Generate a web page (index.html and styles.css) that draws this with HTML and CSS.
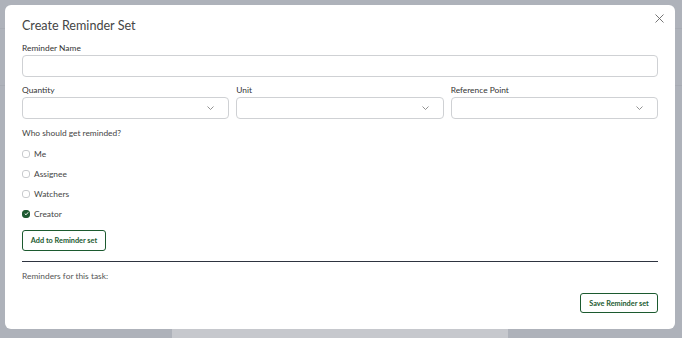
FILE: index.html
```html
<!DOCTYPE html>
<html>
<head>
<meta charset="utf-8">
<link rel="stylesheet" href="styles.css">
</head>
<body>
<div class="backdrop">
  <div class="bg-row bg-row-a"></div>
  <div class="bg-row bg-row-b"></div>
  <div class="bg-panel"><div class="bg-card"></div></div>
</div>
<div class="modal">
  <button class="close" aria-label="Close">
    <svg width="9" height="9" viewBox="0 0 9 9"><path d="M0.5 0.5L8.5 8.5M8.5 0.5L0.5 8.5" stroke="#666" stroke-width="0.9" fill="none"/></svg>
  </button>
  <h1 class="title">Create Reminder Set</h1>
  <label class="label">Reminder Name</label>
  <div class="input"></div>
  <div class="row3">
    <div class="field">
      <label class="label">Quantity</label>
      <div class="select"><svg class="chev" width="7" height="4" viewBox="0 0 7 4"><path d="M0.5 0.5L3.5 3.5L6.5 0.5" stroke="#777" stroke-width="0.8" fill="none"/></svg></div>
    </div>
    <div class="field">
      <label class="label">Unit</label>
      <div class="select"><svg class="chev" width="7" height="4" viewBox="0 0 7 4"><path d="M0.5 0.5L3.5 3.5L6.5 0.5" stroke="#777" stroke-width="0.8" fill="none"/></svg></div>
    </div>
    <div class="field">
      <label class="label">Reference Point</label>
      <div class="select"><svg class="chev" width="7" height="4" viewBox="0 0 7 4"><path d="M0.5 0.5L3.5 3.5L6.5 0.5" stroke="#777" stroke-width="0.8" fill="none"/></svg></div>
    </div>
  </div>
  <p class="question">Who should get reminded?</p>
  <ul class="checks">
    <li><span class="box"></span>Me</li>
    <li><span class="box"></span>Assignee</li>
    <li><span class="box"></span>Watchers</li>
    <li><span class="box checked"><svg width="7" height="7" viewBox="0 0 7 7"><path d="M1.8 3.7L3 4.8L5.2 2.3" stroke="#fff" stroke-width="1" fill="none"/></svg></span>Creator</li>
  </ul>
  <button class="btn add">Add to Reminder set</button>
  <hr class="divider">
  <p class="sub">Reminders for this task:</p>
  <div class="footer">
    <button class="btn save">Save Reminder set</button>
  </div>
</div>
</body>
</html>
```
FILE: styles.css
```css
* { box-sizing: border-box; }
html, body { margin: 0; padding: 0; }
body {
  width: 682px;
  height: 338px;
  overflow: hidden;
  background: #aeb2ba;
  font-family: "Lato", "Noto Sans", sans-serif;
  position: relative;
}
.backdrop {
  position: absolute;
  inset: 0;
}
.bg-row {
  position: absolute;
  left: 0;
  right: 0;
  height: 1px;
  background: #a7abb3;
}
.bg-row-a { top: 28px; }
.bg-row-b { top: 85px; }
.bg-panel {
  position: absolute;
  left: 172px;
  width: 336px;
  top: 300px;
  bottom: 0;
  background: #c6c8cd;
}
.bg-card {
  position: absolute;
  left: 16px;
  width: 303px;
  top: 0;
  height: 29px;
  background: #c9cbcf;
  border-bottom: 1px solid #a9abb0;
  border-radius: 0 0 3px 3px;
}
.modal {
  position: absolute;
  left: 5px;
  top: 5px;
  width: 670px;
  height: 324px;
  background: #fff;
  border-radius: 6px;
  padding: 12px 17px 0 17px;
  display: flex;
  flex-direction: column;
  color: #444;
}
.close {
  position: absolute;
  right: 11px;
  top: 9px;
  border: 0;
  background: none;
  padding: 0;
  width: 9px;
  height: 9px;
  display: block;
}
.close svg { display: block; }
.title {
  margin: 0;
  font-size: 12.6px;
  font-weight: 400;
  color: #454545;
  line-height: 17px;
}
.label {
  display: block;
  font-size: 8.4px;
  color: #333;
  line-height: 11px;
}
.title + .label { margin-top: 9px; }
.input {
  height: 22px;
  border: 1px solid #cfd1d4;
  border-radius: 4px;
  margin-top: 1px;
}
.row3 {
  display: grid;
  grid-template-columns: 1fr 1fr 1fr;
  gap: 7px;
  margin-top: 8px;
}
.select {
  height: 22px;
  border: 1px solid #cfd1d4;
  border-radius: 4px;
  margin-top: 1px;
  display: flex;
  align-items: center;
  justify-content: flex-end;
  padding-right: 14px;
}
.chev { display: block; }
.question {
  margin: 9px 0 0;
  font-size: 8.4px;
  line-height: 11px;
  color: #444;
}
.checks {
  list-style: none;
  margin: 9px 0 0;
  padding: 0;
  display: flex;
  flex-direction: column;
  gap: 9px;
}
.checks li {
  display: flex;
  align-items: center;
  height: 11px;
  font-size: 8.4px;
  color: #444;
}
.box {
  width: 8px;
  height: 8px;
  border: 1px solid #c9cbce;
  border-radius: 3px;
  margin-right: 4px;
  display: flex;
  align-items: center;
  justify-content: center;
}
.box.checked {
  background: #1f5a32;
  border-color: #1f5a32;
}
.box svg { display: block; flex: none; }
.btn {
  font-family: inherit;
  background: #fff;
  border: 1px solid #1c5a2f;
  border-radius: 3px;
  color: #1c5a2f;
  font-weight: 700;
  font-size: 7.3px;
  padding: 0;
}
.add {
  align-self: flex-start;
  margin-top: 11px;
  width: 84px;
  height: 21px;
}
.divider {
  border: 0;
  border-top: 1.3px solid #2e3440;
  margin: 10px 0 0;
}
.sub {
  margin: 9px 0 0;
  font-size: 8.4px;
  line-height: 11px;
  color: #555;
}
.footer {
  display: flex;
  justify-content: flex-end;
  margin-top: 11px;
}
.save {
  width: 78px;
  height: 20px;
}
```
